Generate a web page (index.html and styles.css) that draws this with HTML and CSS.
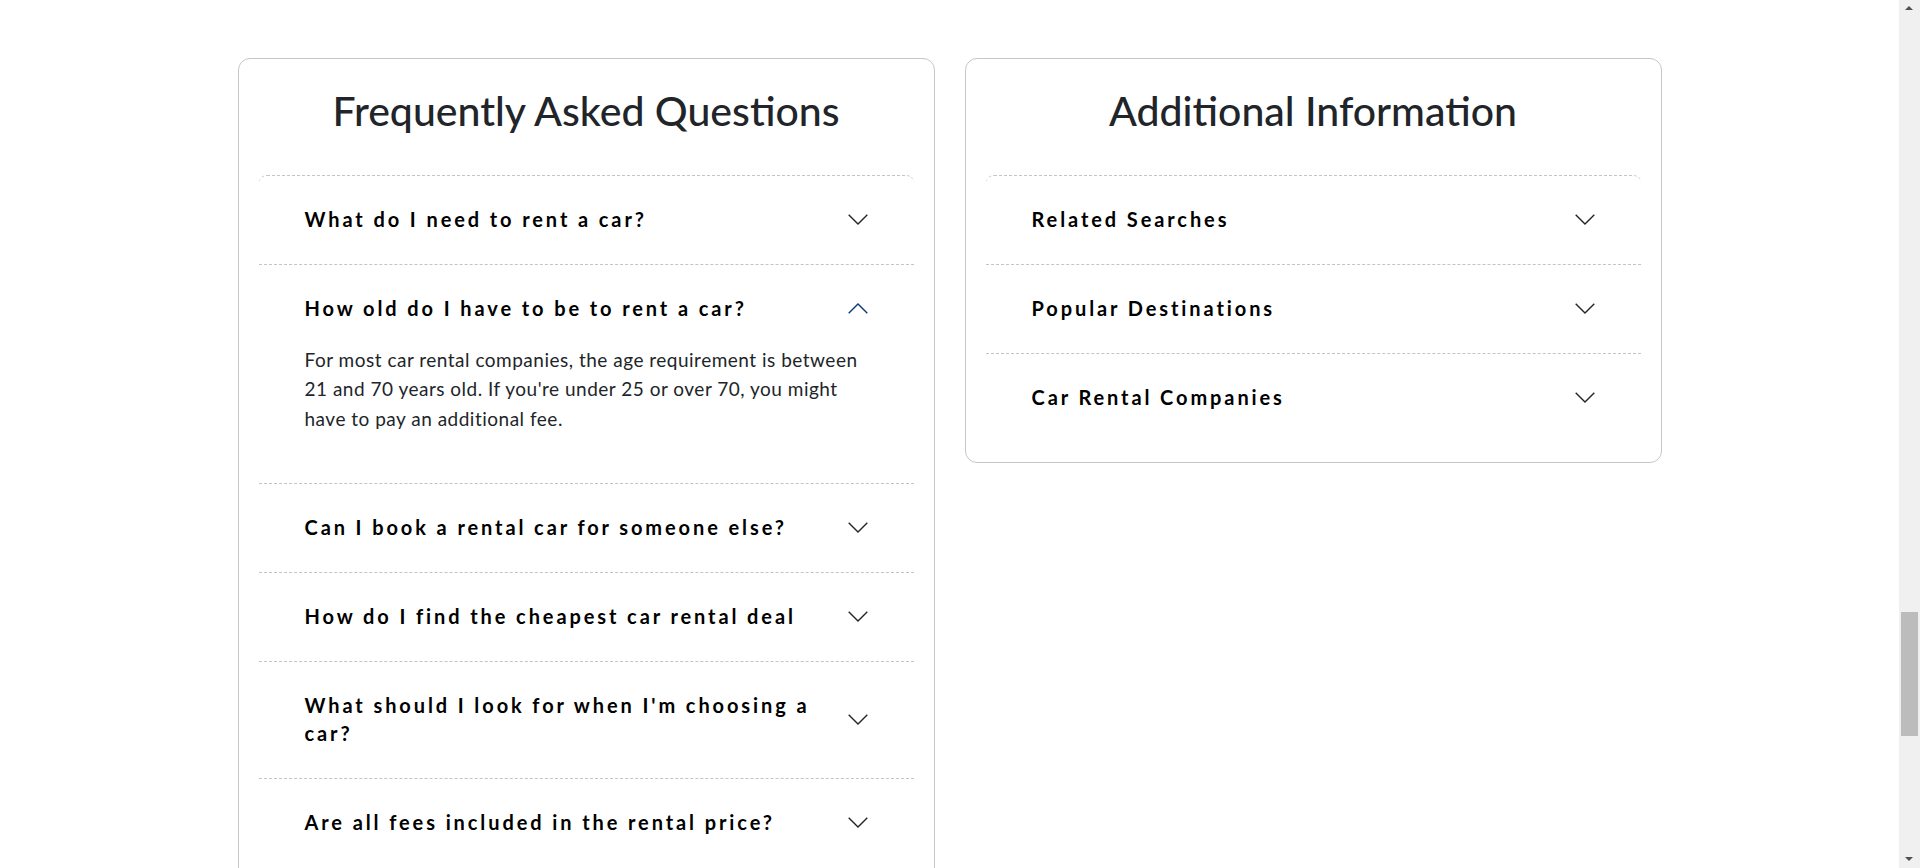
FILE: index.html
```html
<!DOCTYPE html>
<html lang="en">
<head>
<meta charset="utf-8">
<title>Car rental – FAQ</title>
<link rel="stylesheet" href="styles.css">
</head>
<body>
<main class="info-section">
  <section class="panel">
    <h2 class="panel-title">Frequently Asked Questions</h2>
    <div class="accordion">
      <div class="acc-item">
        <button class="acc-header" type="button">
          <span class="acc-label">What do I need to rent a car?</span>
          <svg class="chev" viewBox="0 0 20 11" width="20" height="11"><polyline points="0.7,0.8 10,10 19.3,0.8"/></svg>
        </button>
      </div>
      <div class="acc-item is-open">
        <button class="acc-header" type="button">
          <span class="acc-label">How old do I have to be to rent a car?</span>
          <svg class="chev" viewBox="0 0 20 11" width="20" height="11"><polyline points="0.7,10.2 10,1 19.3,10.2"/></svg>
        </button>
        <div class="acc-body">For most car rental companies, the age requirement is between 21 and 70 years old. If you're under 25 or over 70, you might have to pay an additional fee.</div>
      </div>
      <div class="acc-item">
        <button class="acc-header" type="button">
          <span class="acc-label">Can I book a rental car for someone else?</span>
          <svg class="chev" viewBox="0 0 20 11" width="20" height="11"><polyline points="0.7,0.8 10,10 19.3,0.8"/></svg>
        </button>
      </div>
      <div class="acc-item">
        <button class="acc-header" type="button">
          <span class="acc-label">How do I find the cheapest car rental deal</span>
          <svg class="chev" viewBox="0 0 20 11" width="20" height="11"><polyline points="0.7,0.8 10,10 19.3,0.8"/></svg>
        </button>
      </div>
      <div class="acc-item">
        <button class="acc-header" type="button">
          <span class="acc-label">What should I look for when I'm choosing a car?</span>
          <svg class="chev" viewBox="0 0 20 11" width="20" height="11"><polyline points="0.7,0.8 10,10 19.3,0.8"/></svg>
        </button>
      </div>
      <div class="acc-item">
        <button class="acc-header" type="button">
          <span class="acc-label">Are all fees included in the rental price?</span>
          <svg class="chev" viewBox="0 0 20 11" width="20" height="11"><polyline points="0.7,0.8 10,10 19.3,0.8"/></svg>
        </button>
      </div>
    </div>
  </section>

  <section class="panel">
    <h2 class="panel-title">Additional Information</h2>
    <div class="accordion">
      <div class="acc-item">
        <button class="acc-header" type="button">
          <span class="acc-label">Related Searches</span>
          <svg class="chev" viewBox="0 0 20 11" width="20" height="11"><polyline points="0.7,0.8 10,10 19.3,0.8"/></svg>
        </button>
      </div>
      <div class="acc-item">
        <button class="acc-header" type="button">
          <span class="acc-label">Popular Destinations</span>
          <svg class="chev" viewBox="0 0 20 11" width="20" height="11"><polyline points="0.7,0.8 10,10 19.3,0.8"/></svg>
        </button>
      </div>
      <div class="acc-item">
        <button class="acc-header" type="button">
          <span class="acc-label">Car Rental Companies</span>
          <svg class="chev" viewBox="0 0 20 11" width="20" height="11"><polyline points="0.7,0.8 10,10 19.3,0.8"/></svg>
        </button>
      </div>
    </div>
  </section>
</main>

<div class="scrollbar" aria-hidden="true">
  <span class="sb-arrow sb-up"></span>
  <span class="sb-thumb"></span>
  <span class="sb-arrow sb-down"></span>
</div>
</body>
</html>
```

FILE: styles.css
```css
html {
  background: #ffffff;
}

body {
  margin: 0;
  padding: 58px 21px 40px 0;
  font-family: Lato, "Open Sans", "Liberation Sans", sans-serif;
  color: #212529;
  background: #ffffff;
}

.info-section {
  width: 1424px;
  margin: 0 auto;
  display: grid;
  grid-template-columns: 1fr 1fr;
  gap: 30px;
  align-items: start;
}

.panel {
  border: 1px solid #c6c6c6;
  border-radius: 12px;
  padding: 20px;
  background: #ffffff;
}

.panel-title {
  margin: 8px 0 40px;
  font-size: 41px;
  line-height: 48px;
  font-weight: 500;
  text-align: center;
  color: #212529;
}

.accordion {
  display: flex;
  flex-direction: column;
}

.acc-item {
  border-top: 1px dashed #c4c4c4;
}

.acc-item:first-child {
  border-top-left-radius: 8px;
  border-top-right-radius: 8px;
}

.acc-header {
  display: flex;
  align-items: center;
  justify-content: space-between;
  gap: 16px;
  width: 100%;
  padding: 29px 46px 31px;
  margin: 0;
  border: 0;
  background: transparent;
  font-family: inherit;
  text-align: left;
  cursor: pointer;
}

.acc-label {
  font-size: 20px;
  line-height: 28px;
  font-weight: 700;
  letter-spacing: 2.9px;
  color: #000000;
}

.chev {
  flex: none;
  width: 20px;
  height: 11px;
  fill: none;
  stroke: #212529;
  stroke-width: 1.4;
}

.is-open .acc-header {
  padding-bottom: 23px;
}

.is-open .chev {
  stroke: #0a3a75;
}

.acc-body {
  padding: 0 46px 50px;
  font-size: 19px;
  line-height: 29.4px;
  letter-spacing: 0.5px;
  color: #212529;
}

/* window scrollbar (page is scrolled near its end) */
.scrollbar {
  position: fixed;
  top: 0;
  right: 0;
  bottom: 0;
  width: 21px;
  background: #f0f0f0;
}

.sb-thumb {
  position: absolute;
  top: 612px;
  left: 2px;
  width: 17px;
  height: 124px;
  background: #bcbcbc;
}

.sb-arrow {
  position: absolute;
  left: 6px;
  width: 0;
  height: 0;
  border-left: 4.5px solid transparent;
  border-right: 4.5px solid transparent;
}

.sb-up {
  top: 6px;
  border-bottom: 4px solid #505050;
}

.sb-down {
  bottom: 7px;
  border-top: 4px solid #505050;
}
```
